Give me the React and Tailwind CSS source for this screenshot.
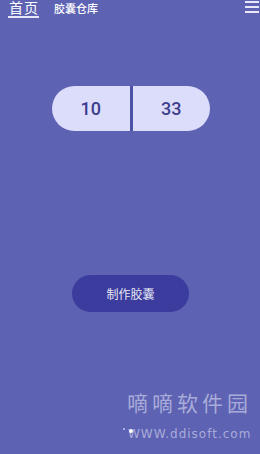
export default function App() {
  const cjk = { fontFamily: '"Noto Sans CJK SC", "Noto Sans", sans-serif' };
  return (
    <div className="relative w-[260px] h-[454px] overflow-hidden bg-[#5d62b3] flex flex-col" style={cjk}>
      <div className="flex items-start h-[18px] pl-[8px]">
        <div className="flex flex-col">
          <span className="text-[14px] leading-[15px] text-white px-[1px] tracking-[1px] whitespace-nowrap">首页</span>
          <div className="h-[2px] w-[31px] bg-[#e6e6f6] mt-[1px]"></div>
        </div>
        <span className="ml-[14px] text-[11px] leading-[14px] text-white mt-[1px] font-medium whitespace-nowrap">胶囊仓库</span>
        <div className="ml-auto flex flex-col gap-[3px] pt-[1px] w-[14px] mr-[1px]">
          <div className="h-[2px] bg-[#e8e8f8]"></div>
          <div className="h-[2px] bg-[#e8e8f8]"></div>
          <div className="h-[2px] bg-[#e8e8f8]"></div>
        </div>
      </div>
      <div className="flex justify-center mt-[68px]">
        <div className="flex h-[45px] w-[158px] ml-[2px]">
          <div className="flex-1 bg-[#dcdcfb] rounded-l-full flex items-center justify-center text-[18px] font-medium text-[#3c3d8c]" style={{ fontFamily: 'Roboto, sans-serif' }}>10</div>
          <div className="w-[3px] bg-[#4d52a6]"></div>
          <div className="flex-1 bg-[#dcdcfb] rounded-r-full flex items-center justify-center text-[18px] font-medium text-[#3c3d8c]" style={{ fontFamily: 'Roboto, sans-serif' }}>33</div>
        </div>
      </div>
      <div className="flex justify-center mt-[144px]">
        <div className="w-[117px] h-[37px] ml-[1px] rounded-full bg-[#3b3c9e] flex items-center justify-center text-[12px] text-[#e8e8f4]">制作胶囊</div>
      </div>
      <div className="absolute left-[127px] top-[389px] text-[21px] leading-[26px] tracking-[4px] text-[#a9acd9] whitespace-nowrap">嘀嘀软件园</div>
      <div className="absolute left-[128px] top-[427px] text-[12px] leading-[15px] tracking-[1px] text-[#a9acd9] whitespace-nowrap" style={{ fontFamily: '"DejaVu Sans", sans-serif' }}>WWW.ddisoft.com</div>
      <div className="absolute left-[123px] top-[428px] w-[2px] h-[2px] rounded-full bg-[#c6c8ea]"></div>
      <div className="absolute left-[129px] top-[429px] w-[4px] h-[4px] rounded-full bg-white"></div>
    </div>
  );
}
